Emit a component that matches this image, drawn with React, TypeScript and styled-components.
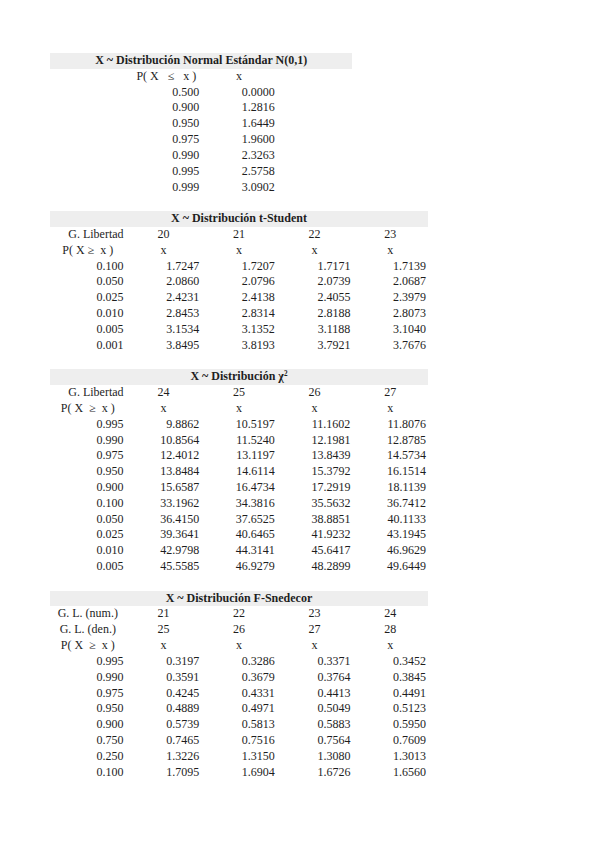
import * as React from "react";
import styled, { createGlobalStyle } from "styled-components";

const ROW = 15.82;
const COL = 75.6;

const GlobalStyle = createGlobalStyle`
  html, body {
    margin: 0;
    padding: 0;
    background: #ffffff;
  }
`;

const Page = styled.div`
  padding: 53px 0 40px 50px;
  font-family: "Liberation Serif", "Times New Roman", serif;
  font-size: 12px;
  color: #1e1e1e;
  display: flex;
  flex-direction: column;
  gap: ${ROW}px;
`;

const Sheet = styled.div<{ cols: number }>`
  display: grid;
  grid-template-columns: repeat(${(p) => p.cols}, ${COL}px);
  grid-auto-rows: ${ROW}px;
  width: ${(p) => p.cols * COL}px;
`;

const Title = styled.div<{ cols: number }>`
  grid-column: 1 / span ${(p) => p.cols};
  background: #eeeeee;
  font-weight: bold;
  text-align: center;
  line-height: ${ROW}px;
  white-space: nowrap;
`;

const Sup = styled.sup`
  font-size: 0.6em;
  line-height: 0;
  vertical-align: 0.6em;
`;

const Cell = styled.div<{ align?: "left" | "center" | "right" }>`
  line-height: ${ROW}px;
  white-space: pre;
  text-align: ${(p) => p.align || "right"};
  padding: 0 2px;
`;

type Row = { label: string; labelAlign?: "left" | "center" | "right"; values: string[]; head?: boolean };

const Table: React.FC<{ title: React.ReactNode; cols: number; rows: Row[]; lead?: number }> = ({
  title,
  cols,
  rows,
  lead = 0,
}) => (
  <Sheet cols={cols}>
    <Title cols={cols}>{title}</Title>
    {rows.map((r, i) => (
      <React.Fragment key={i}>
        {Array.from({ length: lead }).map((_, k) => (
          <Cell key={"l" + k} />
        ))}
        <Cell align={r.labelAlign || "right"}>{r.label}</Cell>
        {r.values.map((v, j) => (
          <Cell key={j} align={r.head ? "center" : "right"}>
            {v}
          </Cell>
        ))}
        {Array.from({ length: cols - lead - 1 - r.values.length }).map((_, k) => (
          <Cell key={"t" + k} />
        ))}
      </React.Fragment>
    ))}
  </Sheet>
);

const normalRows: Row[] = [
  { label: "  P( X   ≤   x )", labelAlign: "center", values: ["x"], head: true },
  ...[
    ["0.500", "0.0000"],
    ["0.900", "1.2816"],
    ["0.950", "1.6449"],
    ["0.975", "1.9600"],
    ["0.990", "2.3263"],
    ["0.995", "2.5758"],
    ["0.999", "3.0902"],
  ].map(([p, x]) => ({ label: p, values: [x] })),
];

const studentRows: Row[] = [
  { label: "G. Libertad", values: ["20", "21", "22", "23"], head: true },
  { label: "P( X ≥  x )", labelAlign: "center", values: ["x", "x", "x", "x"], head: true },
  ...[
    ["0.100", "1.7247", "1.7207", "1.7171", "1.7139"],
    ["0.050", "2.0860", "2.0796", "2.0739", "2.0687"],
    ["0.025", "2.4231", "2.4138", "2.4055", "2.3979"],
    ["0.010", "2.8453", "2.8314", "2.8188", "2.8073"],
    ["0.005", "3.1534", "3.1352", "3.1188", "3.1040"],
    ["0.001", "3.8495", "3.8193", "3.7921", "3.7676"],
  ].map(([p, ...xs]) => ({ label: p, values: xs })),
];

const chiRows: Row[] = [
  { label: "G. Libertad", values: ["24", "25", "26", "27"], head: true },
  { label: "P( X  ≥  x )", labelAlign: "center", values: ["x", "x", "x", "x"], head: true },
  ...[
    ["0.995", "9.8862", "10.5197", "11.1602", "11.8076"],
    ["0.990", "10.8564", "11.5240", "12.1981", "12.8785"],
    ["0.975", "12.4012", "13.1197", "13.8439", "14.5734"],
    ["0.950", "13.8484", "14.6114", "15.3792", "16.1514"],
    ["0.900", "15.6587", "16.4734", "17.2919", "18.1139"],
    ["0.100", "33.1962", "34.3816", "35.5632", "36.7412"],
    ["0.050", "36.4150", "37.6525", "38.8851", "40.1133"],
    ["0.025", "39.3641", "40.6465", "41.9232", "43.1945"],
    ["0.010", "42.9798", "44.3141", "45.6417", "46.9629"],
    ["0.005", "45.5585", "46.9279", "48.2899", "49.6449"],
  ].map(([p, ...xs]) => ({ label: p, values: xs })),
];

const fisherRows: Row[] = [
  { label: "G. L. (num.)", labelAlign: "center", values: ["21", "22", "23", "24"], head: true },
  { label: "G. L. (den.)", labelAlign: "center", values: ["25", "26", "27", "28"], head: true },
  { label: "P( X  ≥  x )", labelAlign: "center", values: ["x", "x", "x", "x"], head: true },
  ...[
    ["0.995", "0.3197", "0.3286", "0.3371", "0.3452"],
    ["0.990", "0.3591", "0.3679", "0.3764", "0.3845"],
    ["0.975", "0.4245", "0.4331", "0.4413", "0.4491"],
    ["0.950", "0.4889", "0.4971", "0.5049", "0.5123"],
    ["0.900", "0.5739", "0.5813", "0.5883", "0.5950"],
    ["0.750", "0.7465", "0.7516", "0.7564", "0.7609"],
    ["0.250", "1.3226", "1.3150", "1.3080", "1.3013"],
    ["0.100", "1.7095", "1.6904", "1.6726", "1.6560"],
  ].map(([p, ...xs]) => ({ label: p, values: xs })),
];

export default function App() {
  return (
    <>
      <GlobalStyle />
      <Page>
        <Table title="X ~ Distribución Normal Estándar N(0,1)" cols={4} lead={1} rows={normalRows} />
        <Table title="X ~ Distribución t-Student" cols={5} rows={studentRows} />
        <Table
          title={
            <>
              X ~ Distribución χ<Sup>2</Sup>
            </>
          }
          cols={5}
          rows={chiRows}
        />
        <Table title="X ~ Distribución F-Snedecor" cols={5} rows={fisherRows} />
      </Page>
    </>
  );
}
